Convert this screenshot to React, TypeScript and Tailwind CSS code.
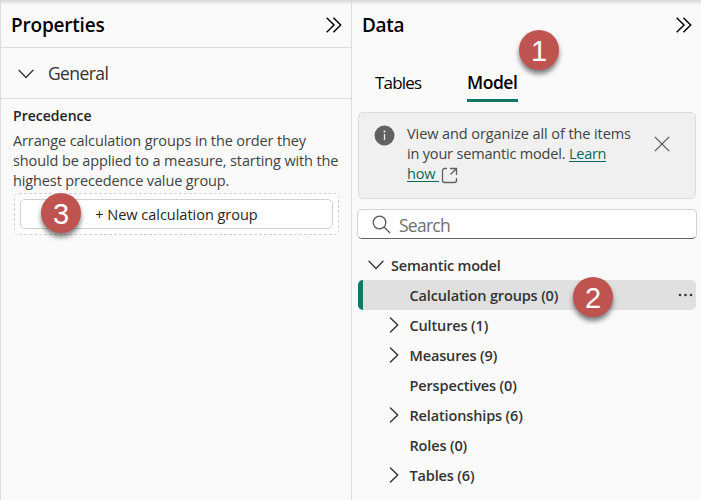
import React from "react";

type IconProps = { className?: string };

function DoubleChevron({ className = "" }: IconProps) {
  return (
    <svg className={className} width="16" height="16" viewBox="0 0 16 16" fill="none" stroke="#000" strokeWidth="1.45">
      <path d="M.7 .7 8 8 .7 15.3M7.4 .7 14.7 8l-7.3 7.3" />
    </svg>
  );
}

function ChevronDown({ className = "" }: IconProps) {
  return (
    <svg className={className} width="16" height="16" viewBox="0 0 16 16" fill="none" stroke="#333" strokeWidth="1.3" strokeLinecap="round">
      <path d="m1 4.3 7 7.2 7-7.2" />
    </svg>
  );
}

function ChevronRight({ className = "" }: IconProps) {
  return (
    <svg className={className} width="10" height="16" viewBox="0 0 10 16" fill="none" stroke="#333" strokeWidth="1.4" strokeLinecap="round">
      <path d="m1.5 1 7.2 7-7.2 7" />
    </svg>
  );
}

function Badge({ label, className }: { label: string; className: string }) {
  return (
    <div
      className={`absolute flex size-10 items-center justify-center rounded-full bg-[#bf5350] pt-0.5 font-['Liberation_Sans',Arial,sans-serif] text-[29px] leading-none text-white shadow-[0_4px_5px_rgba(0,0,0,0.5)] ${className}`}
    >
      {label}
    </div>
  );
}

const treeItems = [
  { label: "Calculation groups (0)", expandable: false, selected: true },
  { label: "Cultures (1)", expandable: true },
  { label: "Measures (9)", expandable: true },
  { label: "Perspectives (0)", expandable: false },
  { label: "Relationships (6)", expandable: true },
  { label: "Roles (0)", expandable: false },
  { label: "Tables (6)", expandable: true },
];

function PropertiesPanel() {
  return (
    <section className="w-[352px] shrink-0 border-x border-[#dcdcdc]">
      <header className="flex h-12 items-center justify-between border-b border-[#dcdcdc] pt-[3px] pr-[9px] pl-[10px]">
        <h2 className="pt-px text-[19px] font-[580] tracking-[-0.2px] text-black">Properties</h2>
        <DoubleChevron />
      </header>
      <div className="flex h-[51px] items-center border-b border-[#dcdcdc] pl-[17px]">
        <ChevronDown className="mt-px" />
        <span className="ml-[14px] pt-px text-[17.5px] tracking-[-0.6px] text-[#333]">General</span>
      </div>
      <div className="pt-[7px] pl-[13px]">
        <h3 className="-ml-px text-[14px] leading-5 font-[570] tracking-[0.02px] text-[#252423]">Precedence</h3>
        <p className="mt-[5px] -ml-px text-[14.5px] leading-5 tracking-[-0.12px] whitespace-nowrap text-[#424242]">
          Arrange calculation groups in the order they
          <br />
          should be applied to a measure, starting with the
          <br />
          highest precedence value group.
        </p>
        <div className="relative mt-[2px] h-[42px] w-[325px] rounded-[5px] border border-dashed border-[#d1d1d1] bg-white p-[5px]">
          <button className="flex h-[30px] w-[313px] items-center justify-center rounded-[5px] border border-[#d1d1d1] bg-white pt-0.5 text-[14.5px] tracking-[-0.02px] text-[#252423]">
            + New calculation group
          </button>
          <Badge label="3" className="top-[-1px] left-[26px]" />
        </div>
      </div>
    </section>
  );
}

function DataPanel() {
  return (
    <section className="relative w-[349px]">
      <header className="flex h-12 items-center justify-between pt-px pr-[9px] pl-[10px]">
        <h2 className="pt-0.5 text-[19px] font-[580] tracking-[-0.35px] text-black">Data</h2>
        <DoubleChevron />
      </header>
      <div className="flex h-[54px] pt-[20px] pl-[23px] text-[17.5px] leading-[29px] text-black">
        <span className="w-[92px] text-[17px] tracking-[-0.8px]">Tables</span>
        <span className="h-[34px] w-[51px] border-b-[3px] border-[#117865] font-[580] tracking-[-0.45px]">Model</span>
      </div>
      <div className="mt-[10px] ml-[6px] flex h-[87px] w-[338px] rounded-[5px] border border-[#dcdcdc] bg-[#f0f0f0]">
        <svg className="mt-[12px] ml-[15px] shrink-0" width="21" height="21" viewBox="0 0 21 21">
          <circle cx="10.5" cy="10.5" r="10" fill="#616161" />
          <path d="M10.5 9v6" stroke="#f0f0f0" strokeWidth="1.3" />
          <circle cx="10.5" cy="6.4" r="1" fill="#f0f0f0" />
        </svg>
        <p className="mt-[11px] ml-[12px] w-[235px] text-[14.5px] leading-5 tracking-[-0.08px] whitespace-nowrap text-[#424242]">
          View and organize all of the items
          <br />
          <span className="tracking-[-0.18px]">in your semantic model.</span>{" "}
          <a className="tracking-[-0.3px] text-[#0c695a] underline underline-offset-2">Learn</a>
          <br />
          <a className="tracking-[-0.15px] text-[#0c695a] underline underline-offset-2">how&nbsp;</a>
          <svg className="ml-[2px] inline-block align-[-5px]" width="17" height="17" viewBox="0 0 17 17" fill="none" stroke="#616161" strokeWidth="1.3">
            <path d="M6 1.5H3.5a2 2 0 0 0-2 2v10a2 2 0 0 0 2 2h10a2 2 0 0 0 2-2V11M9 1.5h6.5V8M15.2 1.8 9.5 7.5" />
          </svg>
        </p>
        <svg className="mt-[23px] ml-[12px]" width="16" height="16" viewBox="0 0 16 16" stroke="#555" strokeWidth="1.2">
          <path d="m.8.8 14.4 14.4M15.2.8.8 15.2" />
        </svg>
      </div>
      <div className="mt-[10px] ml-[5px] flex h-[30px] w-[340px] items-center rounded-[5px] border border-[#d1d1d1] border-b-[#616161] bg-white pl-[14px]">
        <svg width="19" height="19" viewBox="0 0 19 19" fill="none" stroke="#555" strokeWidth="1.3">
          <circle cx="7.5" cy="7.5" r="6.3" />
          <path d="m12 12 6 6" />
        </svg>
        <span className="ml-[8px] pt-0.5 text-[17.5px] tracking-[-0.75px] text-[#707070]">Search</span>
      </div>
      <div className="mt-[11px] ml-[6px] w-[338px] text-[14.5px] font-[570] tracking-[-0.14px] text-[#333]">
        <div className="flex h-[30px] items-center pl-[10px]">
          <ChevronDown />
          <span className="ml-[7px] pt-0.5 tracking-[-0.22px]">Semantic model</span>
        </div>
        {treeItems.map((item) => (
          <div
            key={item.label}
            className={`relative flex h-[30px] items-center overflow-hidden rounded-[5px] pl-[31px] ${item.selected ? "bg-[#e0e0e0]" : ""}`}
          >
            {item.selected && <i className="absolute inset-y-0 left-0 w-[5px] bg-[#117865]" />}
            <span className="w-[20.5px]">{item.expandable && <ChevronRight />}</span>
            <span className="pt-0.5">{item.label}</span>
            {item.selected && (
              <svg className="mr-[3px] ml-auto" width="15" height="4" viewBox="0 0 15 4" fill="#333">
                <circle cx="2" cy="2" r="1.3" />
                <circle cx="7.5" cy="2" r="1.3" />
                <circle cx="13" cy="2" r="1.3" />
              </svg>
            )}
          </div>
        ))}
      </div>
      <Badge label="1" className="top-[30px] left-[167px]" />
      <Badge label="2" className="top-[277px] left-[221px]" />
    </section>
  );
}

export default function App() {
  return (
    <main className="relative flex h-[500px] w-[701px] overflow-hidden bg-[#fafafa] font-['Open_Sans','Noto_Sans',sans-serif]">
      <PropertiesPanel />
      <DataPanel />
      <div className="absolute inset-x-0 top-0 h-[5px] bg-linear-to-b from-[#d8d8d8] to-transparent" />
    </main>
  );
}
